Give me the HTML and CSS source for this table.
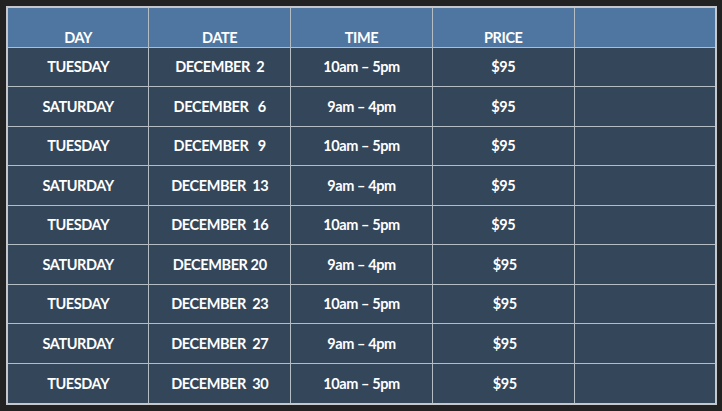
FILE: index.html
```html
<!DOCTYPE html>
<html>
<head>
<meta charset="utf-8">
<link rel="stylesheet" href="styles.css">
</head>
<body>
<table class="schedule">
  <thead>
    <tr><th>DAY</th><th>DATE</th><th>TIME</th><th>PRICE</th><th></th></tr>
  </thead>
  <tbody>
    <tr><td>TUESDAY</td><td>DECEMBER  2</td><td>10am – 5pm</td><td>$95</td><td></td></tr>
    <tr><td>SATURDAY</td><td>DECEMBER   6</td><td>9am – 4pm</td><td>$95</td><td></td></tr>
    <tr><td>TUESDAY</td><td>DECEMBER   9</td><td>10am – 5pm</td><td>$95</td><td></td></tr>
    <tr><td>SATURDAY</td><td>DECEMBER  13</td><td>9am – 4pm</td><td>$95</td><td></td></tr>
    <tr><td>TUESDAY</td><td>DECEMBER  16</td><td>10am – 5pm</td><td>$95</td><td></td></tr>
    <tr><td>SATURDAY</td><td>DECEMBER 20</td><td>9am – 4pm</td><td> $95</td><td></td></tr>
    <tr><td>TUESDAY</td><td>DECEMBER  23</td><td>10am – 5pm</td><td> $95</td><td></td></tr>
    <tr><td>SATURDAY</td><td>DECEMBER  27</td><td>9am – 4pm</td><td> $95</td><td></td></tr>
    <tr><td>TUESDAY</td><td>DECEMBER  30</td><td>10am – 5pm</td><td> $95</td><td></td></tr>
  </tbody>
</table>
</body>
</html>
```
FILE: styles.css
```css
html, body {
  margin: 0;
  padding: 0;
  background: #222222;
  width: 722px;
  height: 411px;
  overflow: hidden;
}
body {
  padding: 6px 0 0 6px;
  box-sizing: border-box;
}
.schedule {
  border-collapse: collapse;
  table-layout: fixed;
  width: 711px;
  height: 399px;
  border: 2px solid #c4c8cc;
  font-family: Lato, "Open Sans", sans-serif;
  font-weight: 700;
  font-size: 14.5px;
  letter-spacing: -0.4px;
  color: #ffffff;
}
.schedule th, .schedule td {
  border: 1px solid #b4bcc4;
  text-align: center;
  white-space: pre;
  padding: 0;
}
.schedule th {
  background: #4e76a0;
  height: 40px;
  vertical-align: bottom;
  padding-bottom: 1px;
  box-sizing: border-box;
}
.schedule td {
  background: #34465a;
  vertical-align: middle;
}
```
